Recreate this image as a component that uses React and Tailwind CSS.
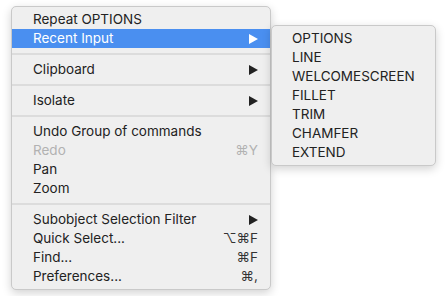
import React from "react";

const Arrow = () => (
  <svg width="9" height="10" viewBox="0 0 9 10" className="shrink-0">
    <polygon points="0,0 9,5 0,10" fill="currentColor" />
  </svg>
);

const mainItems = [
  { label: "Repeat OPTIONS" },
  { label: "Recent Input", sub: true, active: true },
  { sep: true },
  { label: "Clipboard", sub: true },
  { sep: true },
  { label: "Isolate", sub: true },
  { sep: true },
  { label: "Undo Group of commands" },
  { label: "Redo", key: "⌘Y", disabled: true },
  { label: "Pan" },
  { label: "Zoom" },
  { sep: true },
  { label: "Subobject Selection Filter", sub: true },
  { label: "Quick Select...", key: "⌥⌘F" },
  { label: "Find...", key: "⌘F" },
  { label: "Preferences...", key: "⌘," },
];

const recent = ["OPTIONS", "LINE", "WELCOMESCREEN", "FILLET", "TRIM", "CHAMFER", "EXTEND"];

export default function App() {
  return (
    <div
      className="w-[445px] h-[296px] bg-white flex items-start pl-[11px] pt-[6px] text-[13.5px] text-[#222]"
      style={{ fontFamily: "Inter, 'Liberation Sans', 'DejaVu Sans', sans-serif" }}
    >
      {/* MAIN MENU */}
      <div className="w-[260px] bg-[#efefef] border border-[#c9c9c9] rounded-[5px] py-[3px] shadow-[0_3px_10px_rgba(0,0,0,0.18)]">
        {mainItems.map((item, i) =>
          item.sep ? (
            <div key={i} className="h-[12px] flex items-center">
              <div className="w-full h-[2px] bg-[#dcdcdc]" />
            </div>
          ) : (
            <div
              key={i}
              className={`h-[19px] flex items-center justify-between pl-[21px] pr-[12px] ${
                item.active ? "bg-[#4a8ff0] text-white" : item.disabled ? "text-[#b2b2b2]" : ""
              }`}
            >
              <span>{item.label}</span>
              {item.sub && <Arrow />}
              {item.key && <span className={item.disabled ? "" : "text-[#333]"}>{item.key}</span>}
            </div>
          )
        )}
      </div>

      {/* SUBMENU */}
      <div className="mt-[19px] w-[165px] bg-[#efefef] border border-[#c9c9c9] rounded-[5px] py-[3px] shadow-[0_3px_10px_rgba(0,0,0,0.18)]">
        {recent.map((r) => (
          <div key={r} className="h-[19px] flex items-center pl-[20px]">
            {r}
          </div>
        ))}
      </div>
    </div>
  );
}
